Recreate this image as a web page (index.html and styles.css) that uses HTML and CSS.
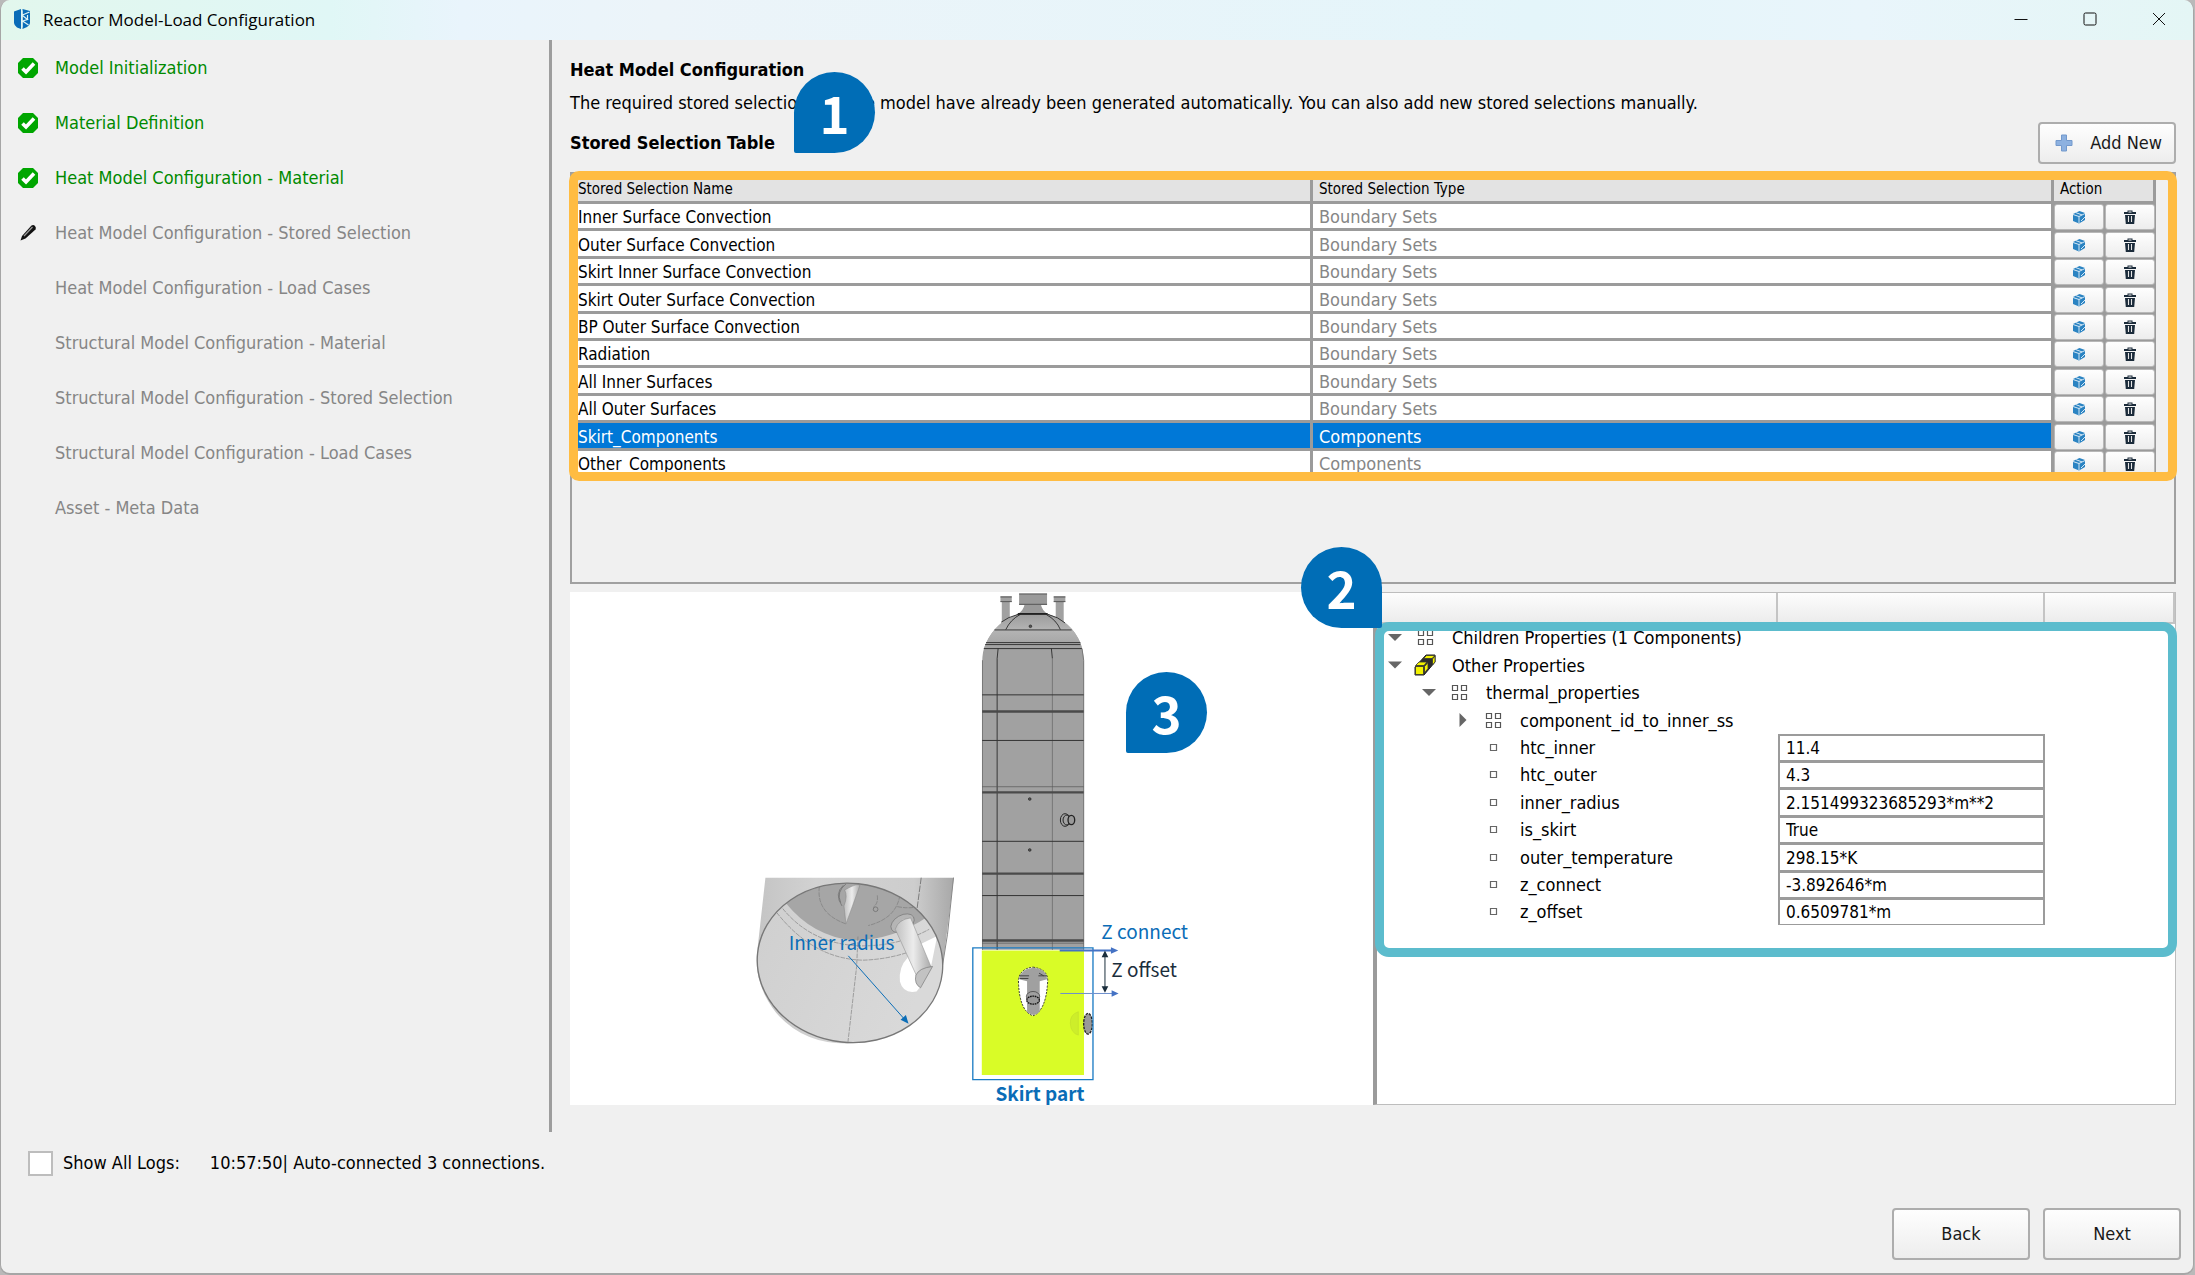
FILE: index.html
```html
<!DOCTYPE html>
<html lang="en">
<head>
<meta charset="utf-8">
<title>Reactor Model-Load Configuration</title>
<link rel="stylesheet" href="styles.css">
</head>
<body>
<svg class="defs" width="0" height="0" aria-hidden="true">
  <symbol id="check" viewBox="0 0 20 20">
    <path fill="#00a600" d="M5 0h10l5 5v10l-5 5H5l-5-5V5z"/>
    <path d="M4.500 10.500 8 14l8-8.500" fill="none" stroke="#fff" stroke-width="3.600"/>
  </symbol>
  <symbol id="cube" viewBox="0 0 14 14">
    <path fill="#2a83c2" d="M1 4 7.500 1 13 3v7l-6 3.500L1 11z"/>
    <path d="M1 4.500 7 6.500 13 3.500M7 6.500V13M4 2.700l6 2.200M9 11l4-4" fill="none" stroke="#e8f3fa" stroke-width=".9"/>
  </symbol>
  <symbol id="trash" viewBox="0 0 12 14">
    <path fill="#1b2b3a" d="M0 2h3.500V.5h5V2H12v2H0zM1 5h10l-.8 9H1.800z"/>
    <path d="M4.500 6v6M7.500 6v6" stroke="#e6e6e6" stroke-width="1.100"/>
    <path d="M4.500 2h3" stroke="#eee" stroke-width="1"/>
  </symbol>
  <symbol id="group" viewBox="0 0 17 17">
    <path d="M1 1h5v5H1zM10 1h5v5h-5zM1 10h5v5H1zM10 10h5v5h-5z" transform="translate(.5 .5)" fill="#fff" stroke="#555" stroke-width="1.200"/>
  </symbol>
  <symbol id="leaf" viewBox="0 0 17 17">
    <path d="M5.500 5.500h6v6h-6z" fill="#fff" stroke="#666" stroke-width="1.200"/>
  </symbol>
  <symbol id="bricks" viewBox="0 0 22 22">
    <path d="M1 13 12 1h9v7L10 21H1z" fill="#2b2b2b" stroke="#222"/>
    <path d="M1.500 12.500h8v8h-8zM1.500 11.500 5 8h8L10 11.500zM10.500 12.500l3.500-4v6l-3.500 4.500z" fill="#f2f200" stroke="#333" stroke-width=".8"/>
    <path d="M9.500 4.500l3-3H21l-3 3zM18.500 5l2.500-3V8l-2.500 3z" fill="#f2f200" stroke="#333" stroke-width=".8"/>
  </symbol>
</svg>

<div class="window">
  <header class="titlebar">
    <svg class="logo" viewBox="0 0 16 20" aria-hidden="true">
      <path fill="#0a6cb8" d="M0 2.500 7 0v20l-4-1.500Q0 16 0 14zM8.500 0 16 2v12q0 2-3 4l-4.500 2z"/>
      <path d="M8 1.500v17M8.500 6l7-3M8.500 6.500l5 4-5 1.500M8.500 12l6 4M13.500 6v5" fill="none" stroke="#dff3f5" stroke-width="1.200"/>
    </svg>
    <h1 class="title">Reactor Model-Load Configuration</h1>
    <div class="caption-buttons">
      <button type="button" aria-label="Minimize"><svg viewBox="0 0 14 14"><path d="M.5 7.500h13"/></svg></button>
      <button type="button" aria-label="Maximize"><svg viewBox="0 0 14 14"><rect x="1" y="1" width="12" height="12" rx="1.500"/></svg></button>
      <button type="button" aria-label="Close"><svg viewBox="0 0 14 14"><path d="M1 1l12 12M13 1 1 13"/></svg></button>
    </div>
  </header>

  <div class="main">
    <nav class="steps">
      <ol>
        <li class="done"><svg class="mark"><use href="#check"/></svg>Model Initialization</li>
        <li class="done"><svg class="mark"><use href="#check"/></svg>Material Definition</li>
        <li class="done"><svg class="mark"><use href="#check"/></svg>Heat Model Configuration - Material</li>
        <li><svg class="mark" viewBox="0 0 20 20"><path d="M2.500 17.500 4 13 13.500 2.500q2-1 3.500.5t.5 3.500L7.500 15.500z" fill="#111"/><path d="m6 13 8.500-9" stroke="#999" stroke-width="1.200"/></svg>Heat Model Configuration - Stored Selection</li>
        <li><span class="mark"></span>Heat Model Configuration - Load Cases</li>
        <li><span class="mark"></span>Structural Model Configuration - Material</li>
        <li><span class="mark"></span>Structural Model Configuration - Stored Selection</li>
        <li><span class="mark"></span>Structural Model Configuration - Load Cases</li>
        <li><span class="mark"></span>Asset - Meta Data</li>
      </ol>
    </nav>

    <section class="content">
      <h2>Heat Model Configuration</h2>
      <p class="intro">The required stored selections for the model have already been generated automatically. You can also add new stored selections manually.</p>
      <div class="toolbar">
        <h2>Stored Selection Table</h2>
        <button type="button" class="btn add"><svg viewBox="0 0 18 18" aria-hidden="true"><path d="M6.500 1h5v5.500H17v5h-5.500V17h-5v-5.500H1v-5h5.500z" fill="#8db1e0" stroke="#7399cc"/></svg>Add New</button>
      </div>
      <div class="callout callout-1">1</div>

      <div class="selection-frame">
        <table class="selections">
          <colgroup><col><col><col class="act"><col class="act"></colgroup>
          <thead><tr><th>Stored Selection Name</th><th>Stored Selection Type</th><th colspan="2">Action</th></tr></thead>
          <tbody>
            <tr><td>Inner Surface Convection</td><td>Boundary Sets</td><td><button type="button" aria-label="Show"><svg><use href="#cube"/></svg></button></td><td><button type="button" aria-label="Delete"><svg><use href="#trash"/></svg></button></td></tr>
            <tr><td>Outer Surface Convection</td><td>Boundary Sets</td><td><button type="button" aria-label="Show"><svg><use href="#cube"/></svg></button></td><td><button type="button" aria-label="Delete"><svg><use href="#trash"/></svg></button></td></tr>
            <tr><td>Skirt Inner Surface Convection</td><td>Boundary Sets</td><td><button type="button" aria-label="Show"><svg><use href="#cube"/></svg></button></td><td><button type="button" aria-label="Delete"><svg><use href="#trash"/></svg></button></td></tr>
            <tr><td>Skirt Outer Surface Convection</td><td>Boundary Sets</td><td><button type="button" aria-label="Show"><svg><use href="#cube"/></svg></button></td><td><button type="button" aria-label="Delete"><svg><use href="#trash"/></svg></button></td></tr>
            <tr><td>BP Outer Surface Convection</td><td>Boundary Sets</td><td><button type="button" aria-label="Show"><svg><use href="#cube"/></svg></button></td><td><button type="button" aria-label="Delete"><svg><use href="#trash"/></svg></button></td></tr>
            <tr><td>Radiation</td><td>Boundary Sets</td><td><button type="button" aria-label="Show"><svg><use href="#cube"/></svg></button></td><td><button type="button" aria-label="Delete"><svg><use href="#trash"/></svg></button></td></tr>
            <tr><td>All Inner Surfaces</td><td>Boundary Sets</td><td><button type="button" aria-label="Show"><svg><use href="#cube"/></svg></button></td><td><button type="button" aria-label="Delete"><svg><use href="#trash"/></svg></button></td></tr>
            <tr><td>All Outer Surfaces</td><td>Boundary Sets</td><td><button type="button" aria-label="Show"><svg><use href="#cube"/></svg></button></td><td><button type="button" aria-label="Delete"><svg><use href="#trash"/></svg></button></td></tr>
            <tr class="selected"><td>Skirt_Components</td><td>Components</td><td><button type="button" aria-label="Show"><svg><use href="#cube"/></svg></button></td><td><button type="button" aria-label="Delete"><svg><use href="#trash"/></svg></button></td></tr>
            <tr><td>Other_Components</td><td>Components</td><td><button type="button" aria-label="Show"><svg><use href="#cube"/></svg></button></td><td><button type="button" aria-label="Delete"><svg><use href="#trash"/></svg></button></td></tr>
          </tbody>
        </table>
        <div class="highlight highlight-table"></div>
      </div>

      <div class="panels">
        <div class="viewer">
          <svg class="scene" viewBox="569 592 804 513" preserveAspectRatio="xMidYMid meet" role="img" aria-label="Reactor with skirt part">
            <defs>
              <linearGradient id="shell" x1="0" x2="1"><stop offset="0" stop-color="#c4c4c4"/><stop offset=".3" stop-color="#d2d2d2"/><stop offset=".8" stop-color="#cdcdcd"/><stop offset="1" stop-color="#a8a8a8"/></linearGradient>
              <linearGradient id="bore" x1="0" x2="1" y2=".3"><stop offset="0" stop-color="#cfcfcf"/><stop offset="1" stop-color="#d9d9d9"/></linearGradient>
              <linearGradient id="pipe" x1="0" x2="1"><stop offset="0" stop-color="#c0c0c0"/><stop offset=".5" stop-color="#ececec"/><stop offset="1" stop-color="#aaa"/></linearGradient>
              <linearGradient id="dome" x1="0" x2="0" y1="0" y2="1"><stop offset="0" stop-color="#9c9c9c"/><stop offset=".45" stop-color="#b4b4b4"/><stop offset="1" stop-color="#a1a1a1"/></linearGradient>
              <clipPath id="boreclip"><ellipse cx="328" cy="369" rx="279" ry="239" transform="rotate(6 328 369)"/></clipPath>
            </defs>

            <!-- vessel -->
            <g transform="translate(900 580) scale(.3333)" stroke-linecap="butt">
              <path d="M300 48h34v17h-6v60h-24V65h-4zM460 48h35v17h-5v60h-24V65h-6z" fill="#a1a1a1"/>
              <path d="M356 40h84v34h-18q2 14 20 28H352q18-14 20-28h-16z" fill="#9a9a9a"/>
              <path d="M300 50h34M460 50h35M356 41h84M356 72h84M300 64h34M460 64h35" stroke="#555" stroke-width="3"/>
              <path d="M352 102h92q70 22 97 88 8 20 10 60v860H245V250q0-40 12-62 30-64 95-86z" fill="#a1a1a1"/>
              <path d="M352 102h92q70 22 97 88l3 16H250l7-18q30-64 95-86z" fill="url(#dome)"/>
              <path d="M352 101h90" stroke="#111" stroke-width="5"/>
              <path d="M302 126q20-16 52-24M442 102q32 8 52 26M316 148q14-30 44-46M438 103q30 16 42 45M282 149h232M257 187h283M254 193h286M250 205h295M293 205l-3 30v875M453 205l3 30" fill="none" stroke="#222" stroke-width="2.500"/>
              <path d="M545 205l5 35v870M246 240v870M456 235v875" fill="none" stroke="#777" stroke-width="3"/>
              <path d="M245 344h305M245 481h305M245 784h305M245 947h305" stroke="#333" stroke-width="3"/>
              <path d="M245 394h305M245 637h305M245 881h305M245 1082h305" stroke="#4a4a4a" stroke-width="7"/>
              <path d="M245 620h305M245 1090h305" stroke="#555" stroke-width="2"/>
              <g fill="#555" stroke="#222" stroke-width="2"><circle cx="390" cy="138" r="4"/><circle cx="388" cy="657" r="4"/><circle cx="388" cy="810" r="4"/></g>
              <g fill="none" stroke="#222" stroke-width="3"><ellipse cx="494" cy="720" rx="14" ry="19"/><ellipse cx="500" cy="720" rx="12" ry="15"/><ellipse cx="513" cy="720" rx="10" ry="14" fill="#999" stroke-width="4"/></g>
            </g>

            <g transform="translate(740 840) scale(.3333)">
              <!-- cylinder seen from below -->
              <path d="M74 113h566l-34 270q-20 170-220 222-180 30-280-86-70-90-56-190z" fill="url(#shell)"/>
              <path d="M639 113l-18 170-16 100" fill="none" stroke="#888" stroke-width="3"/>
              <path d="M542 113l-14 105" stroke="#555" stroke-width="2" stroke-dasharray="20 4"/>
              <ellipse cx="328" cy="369" rx="279" ry="239" transform="rotate(6 328 369)" fill="url(#bore)"/>
              <g clip-path="url(#boreclip)">
                <path d="M136 190q80 100 204 112 120-2 222-72V100H136z" fill="#a6a6a6"/>
                <path d="M108 218q110 140 260 143 110-4 200-52M126 206q90 110 240 112 110 0 200-50M236 140q-10 80 80 112M478 165q-10 70-95 92M410 166q4 24-12 36M470 200q30 6 52 2M352 290l-4 90-26 226" fill="none" stroke="#777" stroke-width="1.800" stroke-dasharray="14 3"/>
                <path d="M500 355q-26 26-22 70 10 38 50 30l16-20-40-90zM530 318l60-30-18 90-10 4z" fill="#fff"/>
                <path d="M312 150q40-22 46-14l-42 116-6-54q12-30 2-48z" fill="url(#pipe)" stroke="#888" stroke-width="1.500"/>
                <path d="M316 132q-30 24-16 56M308 136q-28 26-4 62" fill="none" stroke="#666" stroke-width="2"/>
                <circle cx="405" cy="208" r="7" fill="none" stroke="#666" stroke-width="2"/>
                <ellipse cx="486" cy="250" rx="38" ry="24" transform="rotate(-30 486 250)" fill="#b5b5b5" stroke="#777" stroke-width="2"/>
                <path d="M464 268q10-30 46-34l62 148-42 30z" fill="url(#pipe)" stroke="#888" stroke-width="1.500"/>
                <path d="M526 406q10-22 50-26l-36 64q-20-12-14-38z" fill="#c2c2c2" stroke="#777" stroke-width="2"/>
              </g>
              <ellipse cx="328" cy="369" rx="279" ry="239" transform="rotate(6 328 369)" fill="none" stroke="#777" stroke-width="4"/>
              <path d="M323 348l172 194" stroke="#0b6db7" stroke-width="3"/><path d="M504 552l-8-26-16 14z" fill="#0b6db7"/>

              <!-- skirt -->
              <path d="M724 332h307v374H724z" fill="#d9fc27"/>
              <path d="M878 382q44 6 44 40-4 90-44 106-42-14-44-106 4-36 44-40z" fill="#fff" stroke="#333" stroke-width="3" stroke-dasharray="6 4"/>
              <path d="M836 418q4-30 42-34 40 4 42 34l-22 6v92q-18 20-38 0v-92z" fill="#a0a0a0"/>
              <path d="M836 408h30M894 408h26M838 416h26M896 400l14 8" stroke="#333" stroke-width="2.500"/>
              <ellipse cx="878" cy="470" rx="20" ry="15" fill="#a0a0a0" stroke="#333" stroke-width="2"/>
              <ellipse cx="878" cy="481" rx="19" ry="12" fill="#999" stroke="#111" stroke-width="4" stroke-dasharray="5 2"/>
              <path d="M1014 516q-26 8-24 36 2 28 24 34z" fill="#cdee2a" stroke="#c2e02c" stroke-width="2"/>
              <ellipse cx="1043" cy="552" rx="13" ry="31" fill="#999" stroke="#222" stroke-width="4" stroke-dasharray="8 3"/>
              <path d="M697 324h361v396H697z" fill="none" stroke="#1c7cc4" stroke-width="4"/>
              <path d="M958 332h160" stroke="#4472c4" stroke-width="6"/><path d="M1112 322l22 10-22 10z" fill="#4472c4"/>
              <path d="M960 461h158" stroke="#6b8fce" stroke-width="3"/><path d="M1114 451l21 10-21 10z" fill="#4472c4"/>
              <path d="M1094 340v112" stroke="#1b2e3c" stroke-width="3"/><path d="M1094 332l10 20h-20zM1094 459l10-20h-20z" fill="#1b2e3c"/>
            </g>

            <g class="labels">
              <text x="788" y="950">Inner radius</text>
              <text x="1101" y="939">Z connect</text>
              <text class="ink" x="1111" y="977">Z offset</text>
              <text class="strong" x="995" y="1101">Skirt part</text>
            </g>
          </svg>
          <div class="callout callout-3">3</div>
        </div>

        <div class="properties">
          <table class="tree">
            <colgroup><col class="c-name"><col class="c-value"><col></colgroup>
            <thead><tr><th></th><th></th><th></th></tr></thead>
            <tbody>
              <tr><td class="l0"><span class="node"><i class="open"></i><svg><use href="#group"/></svg>Children Properties (1 Components)</span></td><td></td><td></td></tr>
              <tr><td class="l0"><span class="node"><i class="open"></i><svg class="big"><use href="#bricks"/></svg>Other Properties</span></td><td></td><td></td></tr>
              <tr><td class="l1"><span class="node"><i class="open"></i><svg><use href="#group"/></svg>thermal_properties</span></td><td></td><td></td></tr>
              <tr><td class="l2"><span class="node"><i class="shut"></i><svg><use href="#group"/></svg>component_id_to_inner_ss</span></td><td></td><td></td></tr>
              <tr><td class="l2"><label class="node" for="p1"><i></i><svg><use href="#leaf"/></svg>htc_inner</label></td><td><input id="p1" value="11.4"></td><td></td></tr>
              <tr><td class="l2"><label class="node" for="p2"><i></i><svg><use href="#leaf"/></svg>htc_outer</label></td><td><input id="p2" value="4.3"></td><td></td></tr>
              <tr><td class="l2"><label class="node" for="p3"><i></i><svg><use href="#leaf"/></svg>inner_radius</label></td><td><input id="p3" value="2.151499323685293*m**2"></td><td></td></tr>
              <tr><td class="l2"><label class="node" for="p4"><i></i><svg><use href="#leaf"/></svg>is_skirt</label></td><td><input id="p4" value="True"></td><td></td></tr>
              <tr><td class="l2"><label class="node" for="p5"><i></i><svg><use href="#leaf"/></svg>outer_temperature</label></td><td><input id="p5" value="298.15*K"></td><td></td></tr>
              <tr><td class="l2"><label class="node" for="p6"><i></i><svg><use href="#leaf"/></svg>z_connect</label></td><td><input id="p6" value="-3.892646*m"></td><td></td></tr>
              <tr><td class="l2"><label class="node" for="p7"><i></i><svg><use href="#leaf"/></svg>z_offset</label></td><td><input id="p7" value="0.6509781*m"></td><td></td></tr>
            </tbody>
          </table>
          <div class="highlight highlight-tree"></div>
          <div class="callout callout-2">2</div>
        </div>
      </div>
    </section>
  </div>

  <footer class="footer">
    <div class="logs">
      <label class="log-toggle"><input type="checkbox">Show All Logs:</label>
      <output>10:57:50| Auto-connected 3 connections.</output>
    </div>
    <div class="actions">
      <button type="button" class="btn">Back</button>
      <button type="button" class="btn">Next</button>
    </div>
  </footer>
</div>
</body>
</html>
```
FILE: styles.css
```css
* { box-sizing: border-box; }

body {
  margin: 0;
  background: #b9b9b9;
  color: #000;
  font: 18px/26px "DejaVu Sans Condensed", "Noto Sans", sans-serif;
}

button, input { font: inherit; color: inherit; }
h1, h2, p, ol { margin: 0; padding: 0; }
h2 { font-size: 18px; line-height: 26px; font-weight: bold; }
.defs { position: absolute; }

.window {
  display: flex;
  flex-direction: column;
  min-height: 100vh;
  margin-right: 1px;
  border: 1px solid #a6a6a6;
  border-top: 0;
  border-bottom-width: 2px;
  border-radius: 10px;
  background: #f0f0f0;
  overflow: hidden;
}

/* title bar */
.titlebar {
  display: flex;
  align-items: center;
  height: 40px;
  padding: 0 0 2px 12px;
  background: linear-gradient(to right, #e2f7ed 0%, #e0f7f6 15%, #e9f4fc 21%, #ecf4f9 30%, #e4f5fa 70%, #e9f5fb 85%, #e4f6f5 100%);
}
.logo { width: 18px; height: 20px; margin-right: 12px; }
.title { font: 17px "Open Sans", "Noto Sans", sans-serif; }
.caption-buttons { display: flex; margin-left: auto; }
.caption-buttons button {
  display: grid;
  place-items: center;
  width: 69px;
  height: 38px;
  padding: 0;
  border: 0;
  background: none;
}
.caption-buttons svg { width: 14px; height: 14px; fill: none; stroke: #111; stroke-width: 1; }

/* step list */
.main { display: flex; flex: 1; }
.steps { flex: 0 0 551px; border-right: 3px solid #9d9d9d; }
.steps ol { list-style: none; }
.steps li { display: flex; align-items: center; height: 55px; padding-left: 17px; color: #868686; }
.steps .done { color: #008a00; }
.mark { width: 20px; height: 20px; margin-right: 17px; }

/* content */
.content {
  position: relative;
  flex: 1;
  display: flex;
  flex-direction: column;
  min-width: 0;
  padding: 17px 17px 27px 18px;
}
.intro { margin: 7px 0 6px; }
.toolbar { display: flex; align-items: center; justify-content: space-between; }

.btn {
  height: 52px;
  width: 138px;
  border: 2px solid #adadad;
  border-radius: 4px;
  background: linear-gradient(#fefefe, #ededed);
  color: #1a1a1a;
}
.btn.add { display: flex; align-items: center; justify-content: space-between; height: 42px; padding: 0 12px 0 15px; }
.btn.add svg { width: 18px; height: 18px; }

.selection-frame {
  position: relative;
  min-height: 412px;
  margin: 8px 0;
  padding-right: 18px;
  border: 2px solid #a0a0a0;
}
.selections { width: 100%; table-layout: fixed; border-spacing: 0; }
.selections .act { width: 51px; }
.selections th, .selections td {
  height: 27px;
  padding: 2px 0 0 6px;
  border-right: 3px solid #9b9b9b;
  border-bottom: 3px solid #9b9b9b;
  background: #fff;
  line-height: 20px;
  text-align: left;
}
.selections th { height: 30px; font-size: 15px; font-weight: normal; background: #e3e3e3; }
.selections tr:nth-child(5n+2) td, .selections tr:nth-child(5n+4) td { height: 28px; }
.selections td:first-child { font-size: 17px; }
.selections td:nth-child(2) { color: #868686; }
.selections td:nth-child(n+3) { padding: 0; background: #9b9b9b; border-width: 0 1px 1px 0; }
.selections .selected td:nth-child(-n+2) { background: #0078d7; color: #fff; }
.selections button {
  display: grid;
  place-items: center;
  width: 100%;
  height: 26px;
  padding: 0;
  border: 1px solid #b8b8b8;
  border-radius: 3px;
  background: linear-gradient(#fefefe, #ededed);
}
.selections svg { width: 14px; height: 14px; }

/* annotation frames and callouts */
.highlight { position: absolute; pointer-events: none; border: 9px solid #ffbc42; }
.highlight-table { top: -3px; left: -3px; right: -3px; height: 310px; border-radius: 10px; }
.highlight-tree { top: 29px; left: -2px; right: -2px; height: 335px; border-color: #5cbccd; border-radius: 14px; }

.callout {
  position: absolute;
  width: 81px;
  height: 81px;
  background: #006db6;
  color: #fff;
  font: bold 51px/80px "Noto Sans CJK SC", sans-serif;
  text-align: center;
  border-radius: 41px 41px 41px 2px;
}
.callout-1 { left: 242px; top: 32px; }
.callout-2 { left: -76px; top: -46px; border-radius: 41px 41px 2px 41px; }
.callout-3 { left: 556px; top: 80px; }

/* viewer and property tree */
.panels { flex: 1; display: grid; grid-template-columns: 1fr 1fr; min-height: 513px; }
.viewer { position: relative; background: #fff; }
.scene { display: block; width: 100%; height: 100%; overflow: visible; }
.labels { font: 19px "Noto Sans CJK SC", sans-serif; fill: #0b6db7; }
.labels .ink { fill: #1b2e3c; }
.labels .strong { font-weight: bold; }

.properties {
  position: relative;
  border: 1px solid #bdbdbd;
  border-left: 4px solid #9b9b9b;
  background: #fff;
}
.tree { width: 100%; table-layout: fixed; border-spacing: 0; }
.c-name { width: 401px; }
.c-value { width: 267px; }
.tree th {
  height: 31px;
  padding: 0;
  border-right: 2px solid #c4c4c4;
  border-bottom: 2px solid #c4c4c4;
  background: linear-gradient(#fdfdfd, #ececec);
}
.tree td { height: 27px; padding: 0; }
.tree tr:nth-child(5n+2) td, .tree tr:nth-child(5n+4) td { height: 28px; }
.tree td.l0 { padding-left: 11px; }
.tree td.l1 { padding-left: 45px; }
.tree td.l2 { padding-left: 79px; }
.node { display: flex; align-items: center; height: 27px; line-height: 27px; }
.node i { width: 14px; height: 14px; margin-right: 13px; }
.node .open { background: #666; clip-path: polygon(0 25%, 100% 25%, 50% 75%); }
.node .shut { background: #666; clip-path: polygon(25% 0, 75% 50%, 25% 100%); }
.node svg { width: 17px; height: 17px; margin: 0 18px 0 2px; }
.node .big { width: 22px; height: 22px; margin: 0 16px 0 -1px; }
.tree input {
  display: block;
  width: 100%;
  height: 100%;
  padding: 0 6px;
  border: 2px solid #9b9b9b;
  border-bottom-width: 1px;
  background: #fff;
  font-size: 17px;
  line-height: 20px;
}

/* footer */
.footer { padding: 18px 12px 13px 27px; }
.logs { display: flex; align-items: center; gap: 30px; height: 26px; }
.log-toggle { display: flex; align-items: center; gap: 10px; }
.log-toggle input {
  appearance: none;
  width: 25px;
  height: 25px;
  margin: 0;
  border: 2px solid #bdbdbd;
  background: #fff;
}
.actions { display: flex; justify-content: flex-end; gap: 13px; margin-top: 32px; }
```
